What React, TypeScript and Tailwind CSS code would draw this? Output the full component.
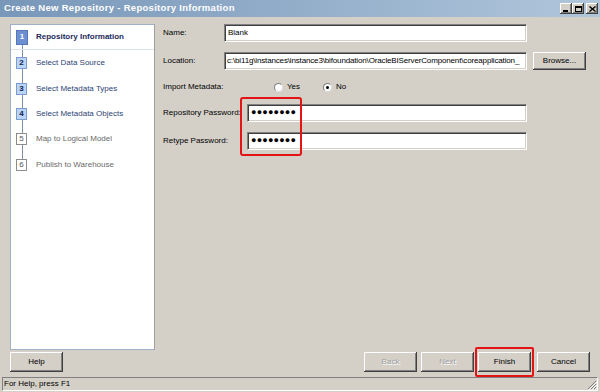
import React from 'react';

const raised =
  'bg-[#d4d0c8] shadow-[inset_-1px_-1px_0_#404040,inset_1px_1px_0_#ffffff,inset_-2px_-2px_0_#808080]';
const sunken =
  'bg-white border-t border-l border-[#808080] border-b border-r border-b-[#ffffff] border-r-[#ffffff] shadow-[inset_1px_1px_0_#404040,inset_-1px_-1px_0_#d4d0c8]';

type Step = { n: number; label: string; state: 'current' | 'todo' | 'off'; h: string };

const steps: Step[] = [
  { n: 2, label: 'Select Data Source', state: 'todo', h: 'h-[26px]' },
  { n: 3, label: 'Select Metadata Types', state: 'todo', h: 'h-[25px]' },
  { n: 4, label: 'Select Metadata Objects', state: 'todo', h: 'h-[25px]' },
  { n: 5, label: 'Map to Logical Model', state: 'off', h: 'h-[26px]' },
  { n: 6, label: 'Publish to Warehouse', state: 'off', h: 'h-[26px]' },
];

const Button: React.FC<{ label: string; disabled?: boolean; className?: string }> = ({
  label,
  disabled,
  className = '',
}) => (
  <div
    className={`${raised} w-[53px] h-[20px] flex items-center justify-center ${
      disabled ? 'text-[#a0a0a0] [text-shadow:1px_1px_0_#ffffff]' : 'text-black'
    } ${className}`}
  >
    {label}
  </div>
);

const Radio: React.FC<{ checked?: boolean }> = ({ checked }) => (
  <span className="w-[9px] h-[9px] rounded-full bg-white border border-[#808080] border-b-[#e0e0e0] border-r-[#e0e0e0] flex items-center justify-center">
    {checked && <span className="w-[3px] h-[3px] rounded-full bg-black" />}
  </span>
);

const WinBtn: React.FC<{ children: React.ReactNode }> = ({ children }) => (
  <div className={`${raised} w-[12px] h-[11px] flex items-center justify-center`}>{children}</div>
);

export default function App() {
  return (
    <div className="w-[600px] h-[392px] bg-[#d4d0c8] flex flex-col overflow-hidden font-['Liberation_Sans',Arial,sans-serif] text-[8px] text-black">
      {/* Title bar */}
      <div className="h-[17px] flex items-center justify-between pl-[4px] pr-[2px] bg-gradient-to-r from-[#7897b9] to-[#b0c6db]">
        <span className="text-white font-bold text-[9.5px] tracking-[0.3px]">
          Create New Repository - Repository Information
        </span>
        <div className="flex">
          <WinBtn>
            <span className="block w-[5px] h-[2px] bg-black mt-[5px] -ml-[1px]" />
          </WinBtn>
          <WinBtn>
            <span className="block w-[7px] h-[6px] border border-black border-t-2" />
          </WinBtn>
          <div className="ml-[2px]">
            <WinBtn>
              <svg width="7" height="6" viewBox="0 0 7 6">
                <path d="M0.5 0.5 L6.5 5.5 M6.5 0.5 L0.5 5.5" stroke="#000" strokeWidth="1.4" />
              </svg>
            </WinBtn>
          </div>
        </div>
      </div>

      {/* Main area */}
      <div className="h-[333px] flex pt-[7px] px-[10px]">
        {/* Steps */}
        <div className="relative w-[145px] h-[326px] bg-white border border-[#9fb0c6] border-r-[#a0a0a0]">
          <div className="absolute left-[11px] top-[19px] h-[122px] w-px bg-[#7d8ea8]" />
          <div className="relative h-[25px] flex items-center pl-[5px] gap-[8px] border-b border-[#dce3eb]">
            <span className="w-[12px] h-[15px] bg-[#6b8fd0] border border-[#5577b8] text-white font-bold flex items-center justify-center">
              1
            </span>
            <span className="font-bold text-[#1d2b5c]">Repository Information</span>
          </div>
          {steps.map((s) => (
            <div key={s.n} className={`relative ${s.h} flex items-center pl-[5px] gap-[9px]`}>
              <span
                className={
                  s.state === 'todo'
                    ? 'w-[11px] h-[12px] bg-[#b9d4f7] border border-[#7c9bcf] text-[#12224a] font-bold flex items-center justify-center'
                    : 'w-[11px] h-[12px] bg-white border border-[#8c8c8c] text-[#555555] flex items-center justify-center'
                }
              >
                {s.n}
              </span>
              <span className={s.state === 'todo' ? 'text-[#2c4476]' : 'text-[#6a6a6a]'}>{s.label}</span>
            </div>
          ))}
        </div>

        {/* Form */}
        <div className="relative ml-[8px] flex flex-col">
          <div className="h-[18px] flex items-center">
            <span className="w-[61px]">Name:</span>
            <div className={`${sunken} w-[303px] h-[18px] flex items-center px-[3px]`}>Blank</div>
          </div>
          <div className="mt-[10px] h-[18px] flex items-center">
            <span className="w-[61px]">Location:</span>
            <div className={`${sunken} w-[303px] h-[18px] flex items-center px-[2px] whitespace-nowrap overflow-hidden tracking-[-0.15px]`}>
              c:\bi11g\instances\instance3\bifoundation\OracleBIServerComponent\coreapplication_
            </div>
            <Button label="Browse..." className="ml-[6px] !h-[18px]" />
          </div>
          <div className="mt-[8px] h-[18px] flex items-center">
            <span className="w-[111px]">Import Metadata:</span>
            <Radio />
            <span className="ml-[4px] w-[36px]">Yes</span>
            <Radio checked />
            <span className="ml-[4px]">No</span>
          </div>
          <div className="mt-[8px] h-[18px] flex items-center">
            <span className="w-[84px]">Repository Password:</span>
            <div className={`${sunken} w-[280px] h-[18px] flex items-center px-[3px] font-bold text-[9px] tracking-[0.2px]`}>
              ●●●●●●●●
            </div>
          </div>
          <div className="mt-[10px] h-[18px] flex items-center">
            <span className="w-[84px]">Retype Password:</span>
            <div className={`${sunken} w-[280px] h-[18px] flex items-center px-[3px] font-bold text-[9px] tracking-[0.2px]`}>
              ●●●●●●●●
            </div>
          </div>
          <div className="absolute left-[77px] top-[73px] w-[62px] h-[59px] border-2 border-[#e41414] rounded-[3px]" />
        </div>
      </div>

      {/* Buttons */}
      <div className="mt-[2px] h-[20px] flex items-center px-[10px]">
        <Button label="Help" />
        <div className="flex-1" />
        <Button label="Back" disabled />
        <Button label="Next" disabled className="ml-[4px]" />
        <div className="relative ml-[4px]">
          <Button label="Finish" />
          <div className="absolute -left-[3px] -right-[3px] -top-[5px] -bottom-[5px] border-2 border-[#e41414] rounded-[2px]" />
        </div>
        <Button label="Cancel" className="ml-[6px]" />
      </div>

      {/* Status bar */}
      <div className="mt-[5px] h-[15px] px-[2px] pb-[1px] flex">
        <div className="relative flex-1 border-t border-l border-[#808080] border-b border-r border-b-[#ffffff] border-r-[#ffffff] flex items-center pl-[1px]">
          For Help, press F1
          <svg className="absolute right-0 bottom-0" width="11" height="11" viewBox="0 0 11 11">
            <path d="M10 2 L2 10 M10 5 L5 10 M10 8 L8 10" stroke="#808080" strokeWidth="1" />
            <path d="M11 3 L3 11 M11 6 L6 11 M11 9 L9 11" stroke="#ffffff" strokeWidth="1" />
          </svg>
        </div>
      </div>
    </div>
  );
}
